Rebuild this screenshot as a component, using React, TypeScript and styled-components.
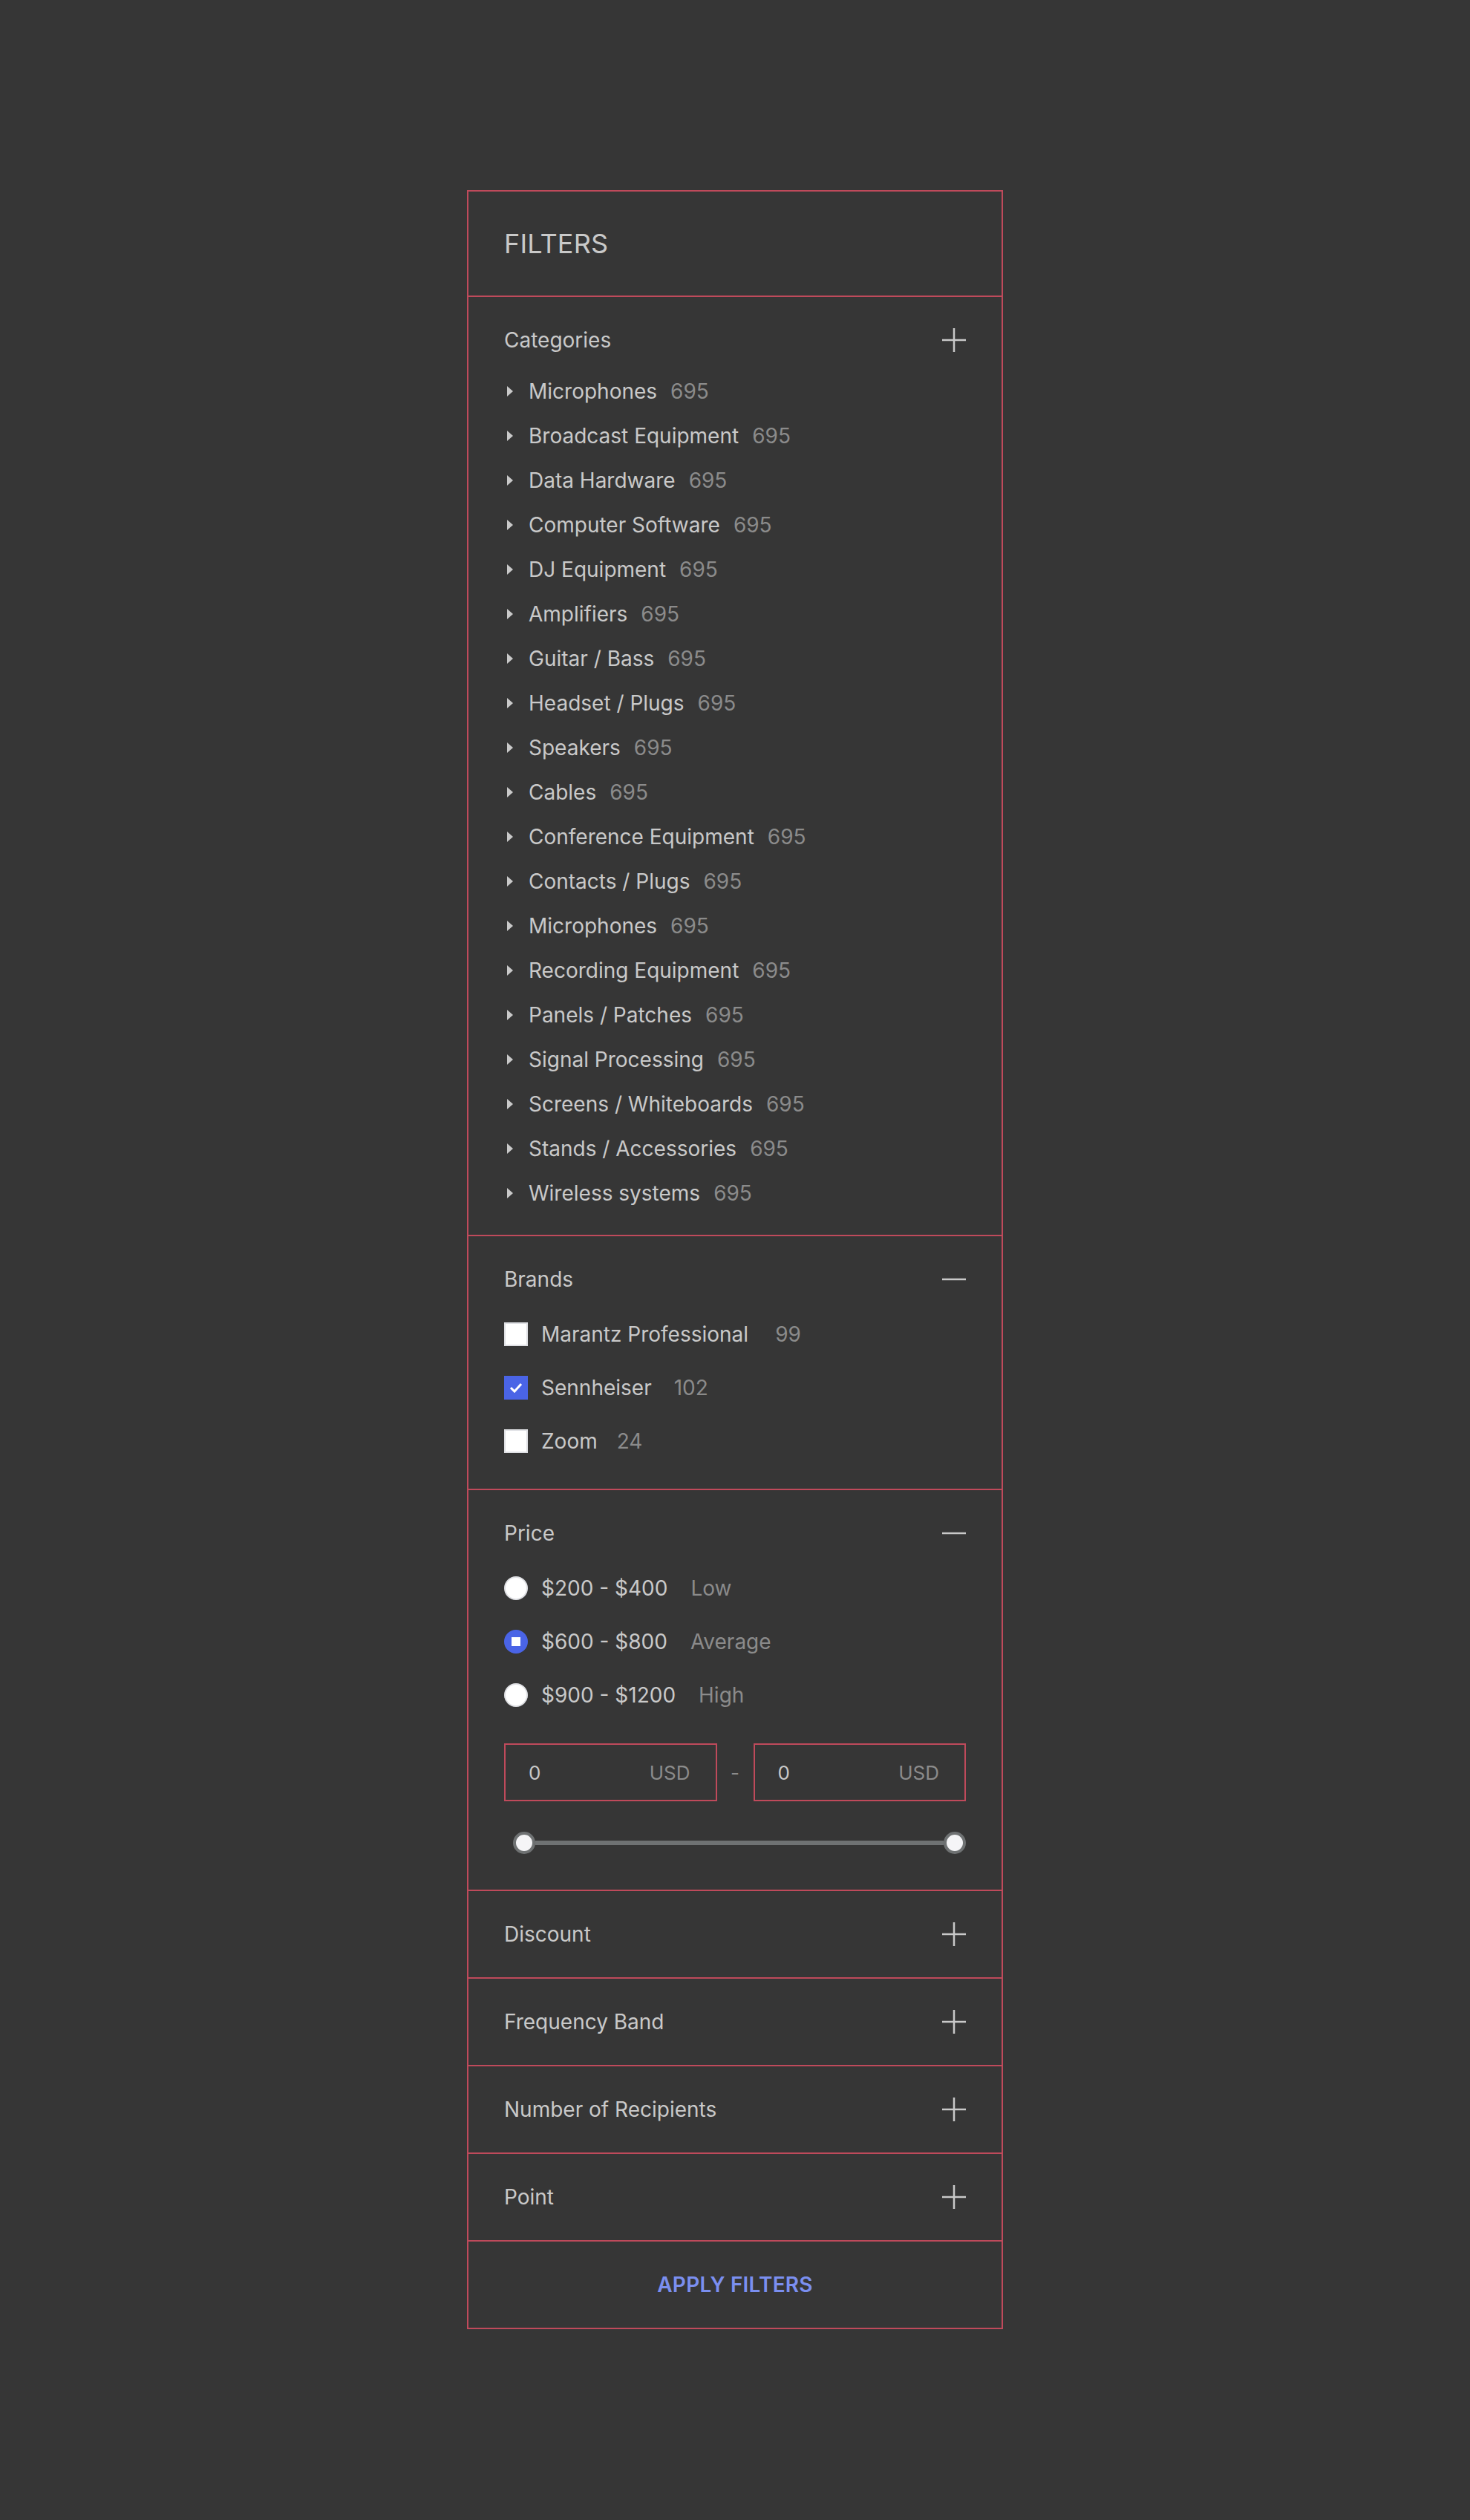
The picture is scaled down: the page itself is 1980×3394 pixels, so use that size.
import React from "react";
import styled, { createGlobalStyle } from "styled-components";

const Global = createGlobalStyle`
  html, body {
    margin: 0;
    padding: 0;
    background: #363636;
  }
  body {
    font-family: Inter, "Noto Sans", "Liberation Sans", sans-serif;
    -webkit-font-smoothing: antialiased;
  }
  * { box-sizing: border-box; }
`;

const RED = "#bf4a5b";
const TEXT = "#c9c9c9";
const MUTED = "#8b8b8b";
const BLUE = "#4a64e6";

const Page = styled.div`
  height: 3394px;
  background: #363636;
  padding-top: 256px;
  display: flex;
  justify-content: center;
  align-items: flex-start;
  overflow: hidden;
`;

const Panel = styled.aside`
  width: 722px;
  border: 2px solid ${RED};
  display: flex;
  flex-direction: column;
  background: #363636;
`;

const Header = styled.header`
  height: 140px;
  padding: 0 48px;
  display: flex;
  align-items: center;
`;

const Title = styled.h1`
  margin: 0;
  font-size: 36px;
  font-weight: 400;
  color: ${TEXT};
  letter-spacing: 0.2px;
`;

const Section = styled.section<{ $pb?: number }>`
  border-top: 2px solid ${RED};
  padding: 42px 48px ${(p) => p.$pb ?? 42}px;
  display: flex;
  flex-direction: column;
`;

const HeadRow = styled.div`
  height: 32px;
  display: flex;
  align-items: center;
  justify-content: space-between;
`;

const HeadLabel = styled.span`
  font-size: 28px;
  color: ${TEXT};
`;

const ToggleIcon = styled.svg`
  width: 32px;
  height: 32px;
  display: block;
`;

const CatList = styled.ul<{ $mt: number }>`
  list-style: none;
  margin: ${(p) => p.$mt}px 0 0;
  padding: 0;
  display: flex;
  flex-direction: column;
  gap: 24px;
`;

const CatItem = styled.li`
  height: 36px;
  display: flex;
  align-items: center;
  font-size: 28px;
  color: ${TEXT};
`;

const Caret = styled.svg`
  width: 8px;
  height: 14px;
  margin: 0 21px 0 4px;
  flex: none;
`;

const Count = styled.span<{ $gap?: number }>`
  color: ${MUTED};
  margin-left: ${(p) => p.$gap ?? 18}px;
`;

const OptionList = styled.div<{ $mt: number }>`
  margin-top: ${(p) => p.$mt}px;
  display: flex;
  flex-direction: column;
  gap: 32px;
`;

const OptionRow = styled.label`
  height: 40px;
  display: flex;
  align-items: center;
  font-size: 28px;
  color: ${TEXT};
`;

const Check = styled.span<{ $on?: boolean }>`
  width: 32px;
  height: 32px;
  flex: none;
  margin-right: 18px;
  background: ${(p) => (p.$on ? BLUE : "#ffffff")};
  border: 2px solid ${(p) => (p.$on ? BLUE : "#dfe0e4")};
  display: flex;
  align-items: center;
  justify-content: center;
`;

const Radio = styled.span<{ $on?: boolean }>`
  width: 32px;
  height: 32px;
  flex: none;
  margin-right: 18px;
  border-radius: 50%;
  background: ${(p) => (p.$on ? BLUE : "#ffffff")};
  border: 2px solid ${(p) => (p.$on ? BLUE : "#dfe0e4")};
  display: flex;
  align-items: center;
  justify-content: center;
`;

const RadioDot = styled.span`
  width: 12px;
  height: 12px;
  background: #ffffff;
`;

const RangeRow = styled.div`
  margin-top: 45px;
  display: grid;
  grid-template-columns: 1fr 49px 1fr;
  align-items: center;
`;

const RangeBox = styled.div`
  height: 78px;
  border: 2px solid ${RED};
  padding: 0 34px 0 31px;
  display: flex;
  align-items: center;
  justify-content: space-between;
  font-size: 26px;
`;

const RangeValue = styled.span`
  color: ${TEXT};
`;

const RangeUnit = styled.span`
  color: ${MUTED};
`;

const Dash = styled.span`
  text-align: center;
  color: ${MUTED};
  font-size: 26px;
`;

const Slider = styled.div`
  margin: 41px 0 0 12px;
  height: 30px;
  display: flex;
  align-items: center;
`;

const Thumb = styled.span`
  width: 30px;
  height: 30px;
  flex: none;
  border-radius: 50%;
  background: #f5f5f7;
  border: 4px solid #6f7273;
`;

const Track = styled.span`
  flex: 1;
  height: 6px;
  background: #6f7273;
`;

const ApplyBar = styled.button`
  border: none;
  border-top: 2px solid ${RED};
  background: transparent;
  height: 118px;
  display: flex;
  align-items: center;
  justify-content: center;
  font-family: inherit;
  font-size: 28px;
  font-weight: 600;
  color: #7b8ff0;
  letter-spacing: 0.2px;
  cursor: pointer;
`;

const Plus = () => (
  <ToggleIcon viewBox="0 0 32 32">
    <line x1="0" y1="16" x2="32" y2="16" stroke={TEXT} strokeWidth="2.5" />
    <line x1="16" y1="0" x2="16" y2="32" stroke={TEXT} strokeWidth="2.5" />
  </ToggleIcon>
);

const Minus = () => (
  <ToggleIcon viewBox="0 0 32 32">
    <line x1="0" y1="16" x2="32" y2="16" stroke={TEXT} strokeWidth="2.5" />
  </ToggleIcon>
);

const categories = [
  "Microphones",
  "Broadcast Equipment",
  "Data Hardware",
  "Computer Software",
  "DJ Equipment",
  "Amplifiers",
  "Guitar / Bass",
  "Headset / Plugs",
  "Speakers",
  "Cables",
  "Conference Equipment",
  "Contacts / Plugs",
  "Microphones",
  "Recording Equipment",
  "Panels / Patches",
  "Signal Processing",
  "Screens / Whiteboards",
  "Stands / Accessories",
  "Wireless systems",
];

const brands = [
  { name: "Marantz Professional", count: "99", on: false, gap: 36 },
  { name: "Sennheiser", count: "102", on: true, gap: 30 },
  { name: "Zoom", count: "24", on: false, gap: 26 },
];

const prices = [
  { range: "$200 - $400", tag: "Low", on: false },
  { range: "$600 - $800", tag: "Average", on: true },
  { range: "$900 - $1200", tag: "High", on: false },
];

const collapsed = ["Discount", "Frequency Band", "Number of Recipients", "Point"];

export default function App() {
  return (
    <>
      <Global />
      <Page>
        <Panel>
          <Header>
            <Title>FILTERS</Title>
          </Header>

          <Section $pb={38}>
            <HeadRow>
              <HeadLabel>Categories</HeadLabel>
              <Plus />
            </HeadRow>
            <CatList $mt={35}>
              {categories.map((c, i) => (
                <CatItem key={i}>
                  <Caret viewBox="0 0 8 14">
                    <polygon points="0,0 8,7 0,14" fill={TEXT} />
                  </Caret>
                  {c}
                  <Count>695</Count>
                </CatItem>
              ))}
            </CatList>
          </Section>

          <Section $pb={44}>
            <HeadRow>
              <HeadLabel>Brands</HeadLabel>
              <Minus />
            </HeadRow>
            <OptionList $mt={38}>
              {brands.map((b) => (
                <OptionRow key={b.name}>
                  <Check $on={b.on}>
                    {b.on && (
                      <svg width="18" height="14" viewBox="0 0 18 14">
                        <polyline
                          points="2,7 7,12 16,2"
                          fill="none"
                          stroke="#fff"
                          strokeWidth="3"
                        />
                      </svg>
                    )}
                  </Check>
                  {b.name}
                  <Count $gap={b.gap}>{b.count}</Count>
                </OptionRow>
              ))}
            </OptionList>
          </Section>

          <Section $pb={48}>
            <HeadRow>
              <HeadLabel>Price</HeadLabel>
              <Minus />
            </HeadRow>
            <OptionList $mt={38}>
              {prices.map((p) => (
                <OptionRow key={p.range}>
                  <Radio $on={p.on}>{p.on && <RadioDot />}</Radio>
                  {p.range}
                  <Count $gap={31}>{p.tag}</Count>
                </OptionRow>
              ))}
            </OptionList>
            <RangeRow>
              <RangeBox>
                <RangeValue>0</RangeValue>
                <RangeUnit>USD</RangeUnit>
              </RangeBox>
              <Dash>-</Dash>
              <RangeBox>
                <RangeValue>0</RangeValue>
                <RangeUnit>USD</RangeUnit>
              </RangeBox>
            </RangeRow>
            <Slider>
              <Thumb />
              <Track />
              <Thumb />
            </Slider>
          </Section>

          {collapsed.map((c) => (
            <Section key={c}>
              <HeadRow>
                <HeadLabel>{c}</HeadLabel>
                <Plus />
              </HeadRow>
            </Section>
          ))}

          <ApplyBar>APPLY FILTERS</ApplyBar>
        </Panel>
      </Page>
    </>
  );
}
